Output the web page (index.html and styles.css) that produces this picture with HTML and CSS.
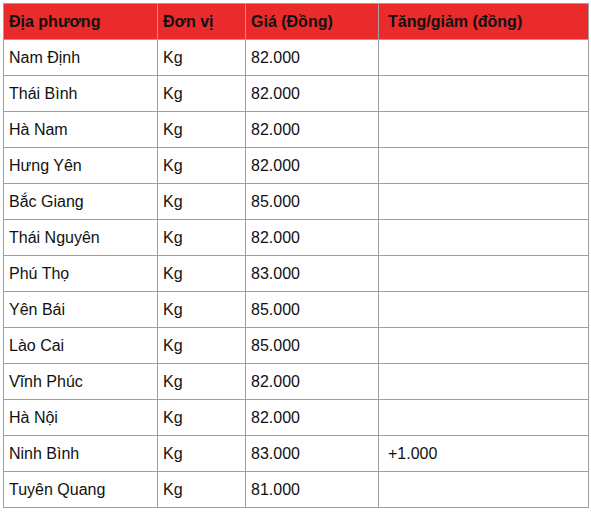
FILE: index.html
```html
<!DOCTYPE html>
<html lang="vi">
<head>
<meta charset="utf-8">
<link rel="stylesheet" href="styles.css">
</head>
<body>
<table class="price-table">
  <colgroup>
    <col class="c1"><col class="c2"><col class="c3"><col class="c4">
  </colgroup>
  <thead>
    <tr><th>Địa phương</th><th>Đơn vị</th><th>Giá (Đồng)</th><th>Tăng/giảm (đồng)</th></tr>
  </thead>
  <tbody>
    <tr><td>Nam Định</td><td>Kg</td><td>82.000</td><td class="chg"></td></tr>
    <tr><td>Thái Bình</td><td>Kg</td><td>82.000</td><td class="chg"></td></tr>
    <tr><td>Hà Nam</td><td>Kg</td><td>82.000</td><td class="chg"></td></tr>
    <tr><td>Hưng Yên</td><td>Kg</td><td>82.000</td><td class="chg"></td></tr>
    <tr><td>Bắc Giang</td><td>Kg</td><td>85.000</td><td class="chg"></td></tr>
    <tr><td>Thái Nguyên</td><td>Kg</td><td>82.000</td><td class="chg"></td></tr>
    <tr><td>Phú Thọ</td><td>Kg</td><td>83.000</td><td class="chg"></td></tr>
    <tr><td>Yên Bái</td><td>Kg</td><td>85.000</td><td class="chg"></td></tr>
    <tr><td>Lào Cai</td><td>Kg</td><td>85.000</td><td class="chg"></td></tr>
    <tr><td>Vĩnh Phúc</td><td>Kg</td><td>82.000</td><td class="chg"></td></tr>
    <tr><td>Hà Nội</td><td>Kg</td><td>82.000</td><td class="chg"></td></tr>
    <tr><td>Ninh Bình</td><td>Kg</td><td>83.000</td><td class="chg">+1.000</td></tr>
    <tr><td>Tuyên Quang</td><td>Kg</td><td>81.000</td><td class="chg"></td></tr>
  </tbody>
</table>
</body>
</html>
```
FILE: styles.css
```css
html, body {
  margin: 0;
  padding: 0;
  background: #ffffff;
}
body {
  padding: 3px;
  font-family: "Liberation Sans", Arial, sans-serif;
  font-size: 16px;
  color: #111111;
}
.price-table {
  border-collapse: collapse;
  width: 585px;
  table-layout: fixed;
}
.c1 { width: 154px; }
.c2 { width: 88px; }
.c3 { width: 133px; }
.c4 { width: 210px; }
.price-table th,
.price-table td {
  border: 1px solid #a0a0a0;
  height: 35px;
  padding: 0 5px;
  text-align: left;
  vertical-align: middle;
  line-height: 18px;
}
.price-table th {
  background: #ea2a2b;
  font-weight: bold;
  color: #111111;
}
.price-table td.chg,
.price-table th:last-child {
  padding-left: 9px;
}
```
